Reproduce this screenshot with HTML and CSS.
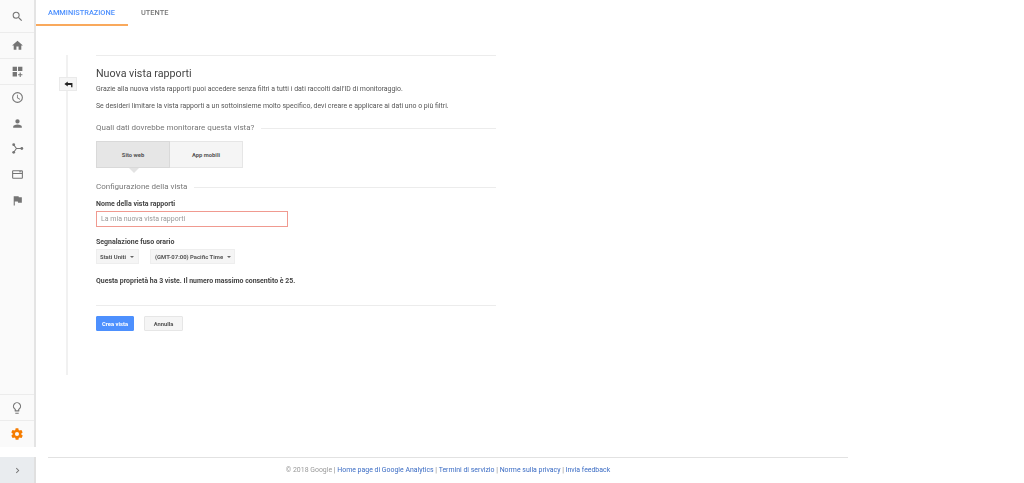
FILE: index.html
```html
<!DOCTYPE html>
<html lang="it">
<head>
<meta charset="utf-8">
<title>Nuova vista rapporti</title>
<link rel="stylesheet" href="styles.css">
</head>
<body>
<div class="app">
  <aside class="side">
    <nav class="rail">
      <div class="cell c-search"><svg viewBox="0 0 24 24" class="ico"><path d="M15.500 14h-.790l-.280-.270A6.471 6.471 0 0 0 16 9.500 6.500 6.500 0 1 0 9.500 16c1.610 0 3.090-.590 4.230-1.570l.270.280v.790l5 4.990L20.490 19l-4.990-5zm-6 0C7.010 14 5 11.990 5 9.500S7.010 5 9.500 5 14 7.010 14 9.500 11.990 14 9.500 14z"/></svg></div>
      <div class="cell c-home"><svg viewBox="0 0 24 24" class="ico"><path d="M10 20v-6h4v6h5v-8h3L12 3 2 12h3v8z"/></svg></div>
      <div class="cell c-dash"><svg viewBox="0 0 24 24" class="ico"><path d="M3 3h8v8H3zM13 3h8v8h-8zM3 13h8v8H3zM16 14h2v3h3v2h-3v3h-2v-3h-3v-2h3z"/></svg></div>
      <div class="cell c-plain"><svg viewBox="0 0 24 24" class="ico"><path d="M12 2a10 10 0 1 0 0 20 10 10 0 0 0 0-20zm0 18a8 8 0 1 1 0-16 8 8 0 0 1 0 16zm.5-13H11v6l5.200 3.200.8-1.300-4.500-2.700z"/></svg></div>
      <div class="cell c-plain"><svg viewBox="0 0 24 24" class="ico"><path d="M12 4a4 4 0 1 1 0 8 4 4 0 0 1 0-8zm0 10c4.400 0 8 1.800 8 4v2H4v-2c0-2.200 3.600-4 8-4z"/></svg></div>
      <div class="cell c-plain"><svg viewBox="0 0 24 24" class="ico"><circle cx="5" cy="5" r="2.600"/><circle cx="5" cy="19" r="2.600"/><circle cx="20" cy="12" r="2.600"/><path d="M5 5l5 7-5 7M10 12h10" fill="none" stroke="#757575" stroke-width="2"/></svg></div>
      <div class="cell c-plain"><svg viewBox="0 0 24 24" class="ico"><path d="M20 4H4a2 2 0 0 0-2 2v12a2 2 0 0 0 2 2h16a2 2 0 0 0 2-2V6a2 2 0 0 0-2-2zm0 14H4v-7h16v7zm0-9H4V6h16v3zm-5-2.500h4V8h-4z"/></svg></div>
      <div class="cell c-plain"><svg viewBox="0 0 24 24" class="ico"><path d="M14.400 6L14 4H5v17h2v-7h5.600l.4 2h7V6z"/></svg></div>
      <div class="spacer"></div>
      <div class="cell c-bulb"><svg viewBox="0 0 24 24" class="ico ico-lg"><path d="M9 21a1 1 0 0 0 1 1h4a1 1 0 0 0 1-1v-1H9zm3-19a7 7 0 0 0-4 12.700V17a1 1 0 0 0 1 1h6a1 1 0 0 0 1-1v-2.300A7 7 0 0 0 12 2zm2.900 11.100-.9.600V16h-4v-2.300l-.9-.6a5 5 0 1 1 5.800 0z"/></svg></div>
      <div class="cell c-gear"><svg viewBox="0 0 24 24" class="ico ico-lg gear"><path fill-rule="evenodd" d="M19.400 13c.1-.3.1-.7.1-1s0-.7-.1-1l2.100-1.600a.5.5 0 0 0 .1-.6l-2-3.500a.5.5 0 0 0-.6-.2l-2.500 1a7.300 7.300 0 0 0-1.700-1L14.400 2.400A.5.5 0 0 0 14 2h-4a.5.5 0 0 0-.5.4L9.100 5.100a7.300 7.300 0 0 0-1.700 1l-2.500-1a.5.5 0 0 0-.6.2l-2 3.500a.5.5 0 0 0 .1.6L4.600 11c-.1.3-.1.7-.1 1s0 .7.1 1l-2.100 1.600a.5.5 0 0 0-.1.6l2 3.500c.1.2.4.3.6.2l2.500-1c.5.4 1.100.7 1.700 1l.4 2.700c0 .2.2.4.5.4h4c.2 0 .5-.2.5-.4l.4-2.700c.6-.3 1.200-.6 1.700-1l2.500 1c.2.1.5 0 .6-.2l2-3.500a.5.5 0 0 0-.1-.6zM12 15.500a3.500 3.500 0 1 1 0-7 3.500 3.500 0 0 1 0 7z"/></svg></div>
    </nav>
    <div class="expand"><svg viewBox="0 0 24 24" class="ico ico-sm"><path d="M8.600 16.600 13.200 12 8.600 7.400 10 6l6 6-6 6z"/></svg></div>
  </aside>

  <div class="main">
    <header class="tabs">
      <a class="tab tab-on">AMMINISTRAZIONE</a>
      <a class="tab">UTENTE</a>
    </header>

    <section class="track">
      <button class="back" type="button" aria-label="Indietro"><svg viewBox="0 0 24 24"><path d="M10 4 1 10.500l9 6.500v-4h9v6h3.500V8H10z"/></svg></button>
      <div class="form">
        <h1 class="title">Nuova vista rapporti</h1>
        <p class="para p-one">Grazie alla nuova vista rapporti puoi accedere senza filtri a tutti i dati raccolti dall'ID di monitoraggio.</p>
        <p class="para p-two">Se desideri limitare la vista rapporti a un sottoinsieme molto specifico, devi creare e applicare ai dati uno o più filtri.</p>

        <div class="legend l-one"><span>Quali dati dovrebbe monitorare questa vista?</span></div>
        <div class="seg">
          <div class="seg-item seg-on">Sito web</div>
          <div class="seg-item">App mobili</div>
        </div>

        <div class="legend l-two"><span>Configurazione della vista</span></div>
        <label class="label lb-name">Nome della vista rapporti</label>
        <div class="input">La mia nuova vista rapporti</div>
        <label class="label lb-zone">Segnalazione fuso orario</label>
        <div class="selects">
          <div class="select s-country">Stati Uniti<i class="caret"></i></div>
          <div class="select s-zone">(GMT-07:00) Pacific Time<i class="caret"></i></div>
        </div>
        <p class="note">Questa proprietà ha 3 viste. Il numero massimo consentito è 25.</p>
        <div class="actions">
          <button class="btn btn-go" type="button">Crea vista</button>
          <button class="btn" type="button">Annulla</button>
        </div>
      </div>
    </section>

    <footer class="foot">
      <span class="copy">© 2018 Google</span> <span class="sep">|</span>
      <a>Home page di Google Analytics</a> <span class="sep">|</span>
      <a>Termini di servizio</a> <span class="sep">|</span>
      <a>Norme sulla privacy</a> <span class="sep">|</span>
      <a>Invia feedback</a>
    </footer>
  </div>
</div>
</body>
</html>
```
FILE: styles.css
```css
* { box-sizing: border-box; }
html, body { margin: 0; height: 100%; background: #fff; }
body { font-family: Roboto, "Liberation Sans", sans-serif; color: #444; overflow: hidden; }
.app { display: flex; height: 483px; filter: blur(.3px); }

.side { width: 36px; flex: none; display: flex; flex-direction: column; }
.rail { height: 447px; background: #fafafa; border-right: 2px solid #e4e4e4; display: flex; flex-direction: column; }
.cell { display: flex; align-items: center; justify-content: center; flex: none; height: 25.600px; }
.c-search { height: 33px; padding-top: 1px; border-bottom: 1px solid #ececec; }
.c-home { height: 26px; border-bottom: 1px solid #ececec; }
.c-dash { height: 26px; border-bottom: 1px solid #ececec; }
.spacer { flex: 1; border-bottom: 1px solid #ececec; }
.c-bulb { height: 26px; border-bottom: 1px solid #ececec; }
.c-gear { height: 26px; }
.ico { width: 13px; height: 13px; fill: #757575; display: block; }
.ico-lg { width: 14px; height: 14px; }
.ico-sm { width: 11px; height: 11px; }
.gear { fill: #f57c00; }
.expand { margin-top: 10px; height: 26px; background: #e9ecef; border-right: 2px solid #e0e0e0; display: flex; align-items: center; justify-content: center; }

.main { flex: 1; min-width: 0; display: flex; flex-direction: column; }
.tabs { display: flex; height: 26px; }
.tab { font-size: 7.400px; font-weight: 500; line-height: 26px; color: #757575; padding: 0 13px; white-space: nowrap; }
.tab-on { width: 92px; padding-left: 12px; color: #4d90fe; border-bottom: 2px solid #f9a95c; line-height: 25px; }

.track { position: relative; width: 432px; margin: 29px 0 0 30px; height: 320px; border-left: 2px solid #f1f1f1; padding-left: 28px; }
.back { position: absolute; left: -9px; top: 22px; width: 18px; height: 14px; padding: 0; background: #f5f5f5; border: 1px solid #eaeaea; display: flex; align-items: center; justify-content: center; }
.back svg { width: 9px; height: 9px; fill: #222; }

.form { border-top: 1px solid #ececec; width: 400px; height: 100%; }
.title { margin: 11px 0 0; font-size: 10.700px; line-height: 13px; font-weight: 400; color: #444; }
.para { margin: 0; font-size: 6.950px; line-height: 9px; color: #555; }
.p-one { margin-top: 5px; }
.p-two { margin-top: 8px; }
.legend { display: flex; align-items: center; gap: 7px; font-size: 8px; line-height: 10px; color: #777; }
.legend::after { content: ""; flex: 1; height: 1px; background: #ececec; }
.l-one { margin-top: 12px; }
.l-two { margin-top: 14px; }
.seg { display: flex; width: 147px; height: 27px; margin-top: 8px; position: relative; }
.seg-item { flex: 1; display: flex; align-items: center; justify-content: center; font-size: 5.800px; font-weight: 700; color: #555; background: #f5f5f5; border: 1px solid #e6e6e6; border-left: 0; }
.seg-on { background: #e6e6e6; border: 1px solid #d9d9d9; position: relative; }
.seg-on::after { content: ""; position: absolute; left: 32px; top: 26px; border: 5px solid transparent; border-top-color: #e3e3e3; border-bottom: 0; }
.label { display: block; font-size: 7px; line-height: 9px; font-weight: 700; color: #444; }
.lb-name { margin-top: 8px; }
.lb-zone { margin-top: 11px; }
.input { width: 192px; height: 16px; margin-top: 2px; padding-left: 4px; border: 1px solid #f09a90; font-size: 7px; line-height: 14px; color: #999; }
.selects { display: flex; gap: 11px; margin-top: 2px; }
.select { height: 15px; padding: 0 3px; background: #f5f5f5; border: 1px solid #eee; font-size: 5.900px; font-weight: 700; color: #555; display: flex; align-items: center; gap: 4px; white-space: nowrap; }
.caret { width: 0; height: 0; border: 2.500px solid transparent; border-top-color: #666; border-bottom: 0; }
.s-country { width: 43px; }
.s-zone { width: 85px; padding-left: 4px; }
.note { margin: 13px 0 0; font-size: 6.950px; line-height: 9px; font-weight: 700; color: #444; }
.actions { display: flex; gap: 10px; margin-top: 19px; padding-top: 10px; border-top: 1px solid #ececec; }
.btn { width: 39px; height: 15px; padding: 0; background: #f5f5f5; border: 1px solid #e6e6e6; border-radius: 1px; font-family: inherit; font-size: 5.800px; font-weight: 700; color: #555; }
.btn-go { width: 38px; background: #4d90fe; border-color: #4d90fe; color: #fff; }

.foot { width: 800px; margin: 82px 0 0 12px; border-top: 1px solid #e2e2e2; text-align: center; font-size: 6.930px; line-height: 9px; padding-top: 8px; color: #999; }
.foot a { color: #3b6cc4; }
.sep { color: #888; }
```
